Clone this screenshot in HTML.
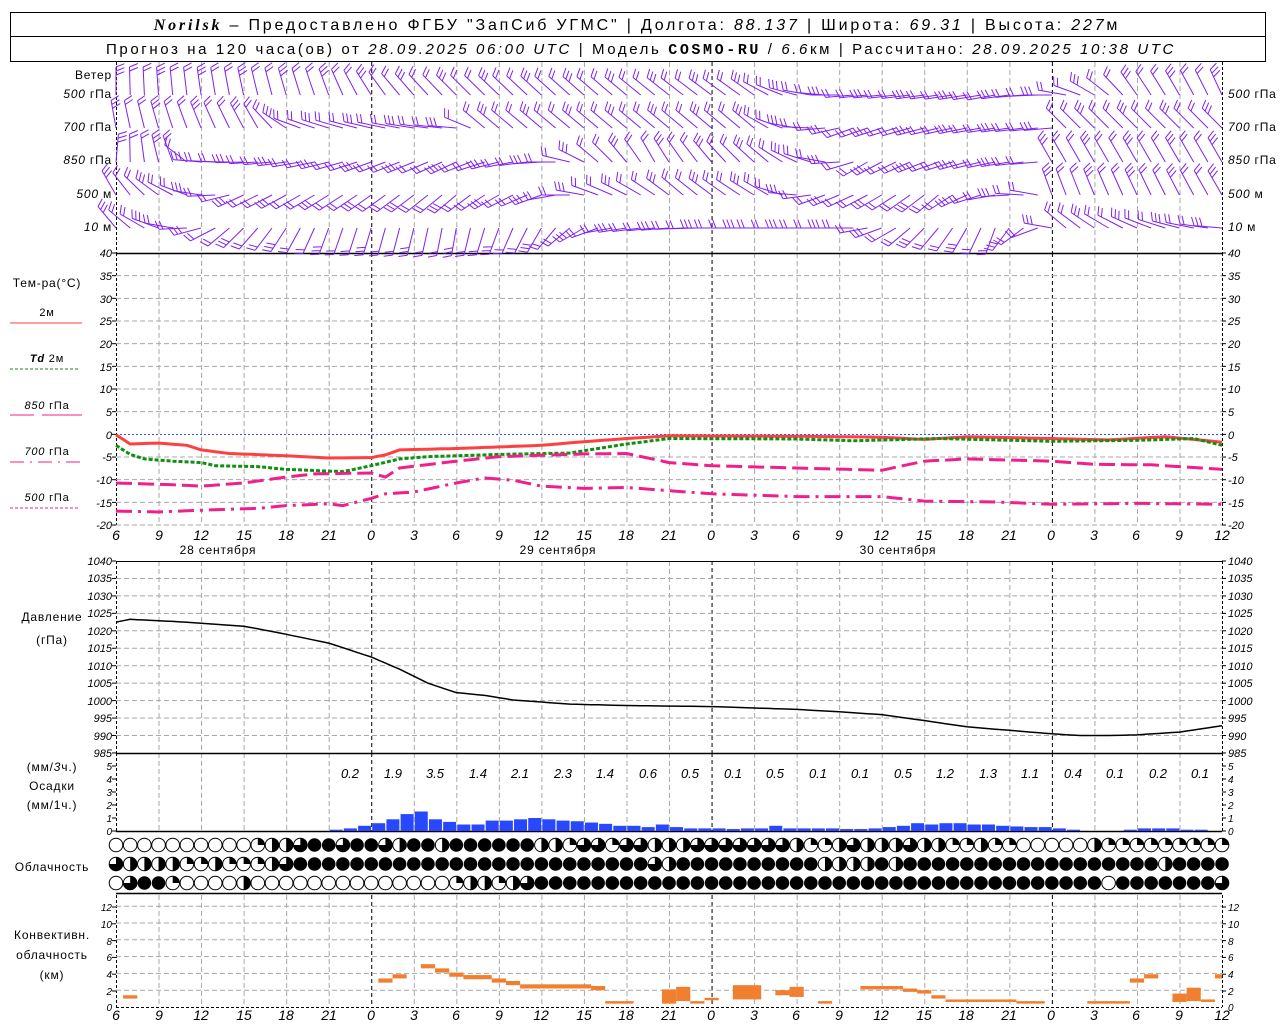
<!DOCTYPE html>
<html><head><meta charset="utf-8"><style>
body{margin:0;background:#fff;}
svg{display:block;font-family:"Liberation Sans",sans-serif;}
.t{font-size:11px;font-style:italic;}
.l{font-size:12px;letter-spacing:0.8px;}
.h{font-size:14px;font-style:italic;}
</style></head><body>
<svg id="s" width="1280" height="1024" viewBox="0 0 1280 1024" xmlns="http://www.w3.org/2000/svg">
<rect x="0" y="0" width="1280" height="1024" fill="#fff"/>
<g id="grid"></g>
<g id="data"></g>
<!-- header -->
<rect x="10.5" y="12.5" width="1255" height="49" fill="none" stroke="#000"/>
<line x1="10" y1="36.5" x2="1265" y2="36.5" stroke="#000"/>
<text x="637" y="30" text-anchor="middle" font-size="16" letter-spacing="2.8"><tspan font-family="Liberation Serif" font-style="italic" font-weight="bold">Norilsk</tspan> – Предоставлено ФГБУ "ЗапСиб УГМС" | Долгота: <tspan font-style="italic">88.137</tspan> | Широта: <tspan font-style="italic">69.31</tspan> | Высота: <tspan font-style="italic">227</tspan>м</text>
<text x="641" y="54" text-anchor="middle" font-size="15" letter-spacing="2.6">Прогноз на 120 часа(ов) от <tspan font-style="italic">28.09.2025 06:00 UTC</tspan>  | Модель <tspan font-family="Liberation Mono" font-weight="bold">COSMO-RU</tspan> / <tspan font-style="italic">6.6</tspan>км | Рассчитано: <tspan font-style="italic">28.09.2025 10:38 UTC</tspan></text>

<!-- wind labels -->
<g class="l" font-size="11">
<text x="112" y="79" text-anchor="end">Ветер</text>
<text x="112" y="98" text-anchor="end"><tspan font-style="italic">500</tspan> гПа</text>
<text x="112" y="131" text-anchor="end"><tspan font-style="italic">700</tspan> гПа</text>
<text x="112" y="164" text-anchor="end"><tspan font-style="italic">850</tspan> гПа</text>
<text x="112" y="198" text-anchor="end"><tspan font-style="italic">500</tspan> м</text>
<text x="112" y="231" text-anchor="end"><tspan font-style="italic">10</tspan>   м</text>
<text x="1228" y="98"><tspan font-style="italic">500</tspan> гПа</text>
<text x="1228" y="131"><tspan font-style="italic">700</tspan> гПа</text>
<text x="1228" y="164"><tspan font-style="italic">850</tspan> гПа</text>
<text x="1228" y="198"><tspan font-style="italic">500</tspan> м</text>
<text x="1228" y="231"><tspan font-style="italic">10</tspan>   м</text>
</g>
<!-- temp legend -->
<g class="l">
<text x="47" y="287" text-anchor="middle">Тем-ра(°C)</text>
<text x="47" y="316" text-anchor="middle" font-size="11">2м</text>
<text x="47" y="362" text-anchor="middle" font-size="11"><tspan font-style="italic" font-weight="bold">Td</tspan>  2м</text>
<text x="47" y="409" text-anchor="middle" font-size="11"><tspan font-style="italic">850</tspan> гПа</text>
<text x="47" y="455" text-anchor="middle" font-size="11"><tspan font-style="italic">700</tspan> гПа</text>
<text x="47" y="501" text-anchor="middle" font-size="11"><tspan font-style="italic">500</tspan> гПа</text>
<text x="218" y="554" text-anchor="middle">28 сентября</text>
<text x="558" y="554" text-anchor="middle">29 сентября</text>
<text x="898" y="554" text-anchor="middle">30 сентября</text>
<text x="52" y="621" text-anchor="middle">Давление</text>
<text x="52" y="644" text-anchor="middle">(гПа)</text>
<text x="52" y="771" text-anchor="middle">(мм/<tspan font-style="italic">3</tspan>ч.)</text>
<text x="52" y="790" text-anchor="middle">Осадки</text>
<text x="52" y="809" text-anchor="middle">(мм/1ч.)</text>
<text x="52" y="871" text-anchor="middle">Облачность</text>
<text x="52" y="939" text-anchor="middle">Конвективн.</text>
<text x="52" y="959" text-anchor="middle">облачность</text>
<text x="52" y="979" text-anchor="middle">(км)</text>
</g>
<line x1="10" y1="323" x2="82" y2="323" stroke="#ff4040" stroke-width="1"/>
<line x1="10" y1="369" x2="78" y2="369" stroke="#208020" stroke-dasharray="3,2"/>
<line x1="10" y1="415" x2="34" y2="415" stroke="#f0208a"/><line x1="42" y1="415" x2="82" y2="415" stroke="#f0208a"/>
<line x1="10" y1="462" x2="82" y2="462" stroke="#f0208a" stroke-dasharray="14,6,2,6"/>
<line x1="10" y1="508" x2="78" y2="508" stroke="#f0208a" stroke-dasharray="3,2"/>

<!-- temp axis labels -->
<g class="t">
<text x="112" y="257" text-anchor="end">40</text><text x="112" y="280" text-anchor="end">35</text><text x="112" y="303" text-anchor="end">30</text><text x="112" y="325" text-anchor="end">25</text><text x="112" y="348" text-anchor="end">20</text><text x="112" y="371" text-anchor="end">15</text><text x="112" y="393" text-anchor="end">10</text><text x="112" y="416" text-anchor="end">5</text><text x="112" y="439" text-anchor="end">0</text><text x="112" y="461" text-anchor="end">-5</text><text x="112" y="484" text-anchor="end">-10</text><text x="112" y="507" text-anchor="end">-15</text><text x="112" y="529" text-anchor="end">-20</text>
<text x="1228" y="257">40</text><text x="1228" y="280">35</text><text x="1228" y="303">30</text><text x="1228" y="325">25</text><text x="1228" y="348">20</text><text x="1228" y="371">15</text><text x="1228" y="393">10</text><text x="1228" y="416">5</text><text x="1228" y="439">0</text><text x="1228" y="461">-5</text><text x="1228" y="484">-10</text><text x="1228" y="507">-15</text><text x="1228" y="529">-20</text>
<!-- pressure -->
<text x="112" y="565" text-anchor="end">1040</text><text x="112" y="582" text-anchor="end">1035</text><text x="112" y="600" text-anchor="end">1030</text><text x="112" y="617" text-anchor="end">1025</text><text x="112" y="635" text-anchor="end">1020</text><text x="112" y="652" text-anchor="end">1015</text><text x="112" y="670" text-anchor="end">1010</text><text x="112" y="687" text-anchor="end">1005</text><text x="112" y="705" text-anchor="end">1000</text><text x="112" y="722" text-anchor="end">995</text><text x="112" y="740" text-anchor="end">990</text><text x="112" y="757" text-anchor="end">985</text>
<text x="1228" y="565">1040</text><text x="1228" y="582">1035</text><text x="1228" y="600">1030</text><text x="1228" y="617">1025</text><text x="1228" y="635">1020</text><text x="1228" y="652">1015</text><text x="1228" y="670">1010</text><text x="1228" y="687">1005</text><text x="1228" y="705">1000</text><text x="1228" y="722">995</text><text x="1228" y="740">990</text><text x="1228" y="757">985</text>
<!-- precip -->
<g font-size="10"><text x="112" y="770" text-anchor="end">5</text><text x="112" y="783" text-anchor="end">4</text><text x="112" y="796" text-anchor="end">3</text><text x="112" y="809" text-anchor="end">2</text><text x="112" y="822" text-anchor="end">1</text><text x="112" y="835" text-anchor="end">0</text>
<text x="1228" y="770">5</text><text x="1228" y="783">4</text><text x="1228" y="796">3</text><text x="1228" y="809">2</text><text x="1228" y="822">1</text><text x="1228" y="835">0</text>
<!-- conv -->
<text x="112" y="911" text-anchor="end">12</text><text x="112" y="928" text-anchor="end">10</text><text x="112" y="945" text-anchor="end">8</text><text x="112" y="961" text-anchor="end">6</text><text x="112" y="978" text-anchor="end">4</text><text x="112" y="995" text-anchor="end">2</text><text x="112" y="1011" text-anchor="end">0</text>
<text x="1228" y="911">12</text><text x="1228" y="928">10</text><text x="1228" y="945">8</text><text x="1228" y="961">6</text><text x="1228" y="978">4</text><text x="1228" y="995">2</text><text x="1228" y="1011">0</text></g>
</g>
<!-- hour labels -->
<g class="h" text-anchor="middle">
<g transform="translate(0,540)">
<text x="116">6</text><text x="159">9</text><text x="201">12</text><text x="244">15</text><text x="286">18</text><text x="329">21</text><text x="371">0</text><text x="414">3</text><text x="456">6</text><text x="499">9</text><text x="541">12</text><text x="584">15</text><text x="626">18</text><text x="669">21</text><text x="711">0</text><text x="754">3</text><text x="796">6</text><text x="839">9</text><text x="881">12</text><text x="924">15</text><text x="966">18</text><text x="1009">21</text><text x="1051">0</text><text x="1094">3</text><text x="1136">6</text><text x="1179">9</text><text x="1222">12</text>
</g>
<g transform="translate(0,1020)">
<text x="116">6</text><text x="159">9</text><text x="201">12</text><text x="244">15</text><text x="286">18</text><text x="329">21</text><text x="371">0</text><text x="414">3</text><text x="456">6</text><text x="499">9</text><text x="541">12</text><text x="584">15</text><text x="626">18</text><text x="669">21</text><text x="711">0</text><text x="754">3</text><text x="796">6</text><text x="839">9</text><text x="881">12</text><text x="924">15</text><text x="966">18</text><text x="1009">21</text><text x="1051">0</text><text x="1094">3</text><text x="1136">6</text><text x="1179">9</text><text x="1222">12</text>
</g>
<g transform="translate(0,778)" font-size="13">
<text x="350">0.2</text><text x="393">1.9</text><text x="435">3.5</text><text x="478">1.4</text><text x="520">2.1</text><text x="563">2.3</text><text x="605">1.4</text><text x="648">0.6</text><text x="690">0.5</text><text x="733">0.1</text><text x="775">0.5</text><text x="818">0.1</text><text x="860">0.1</text><text x="903">0.5</text><text x="945">1.2</text><text x="988">1.3</text><text x="1030">1.1</text><text x="1073">0.4</text><text x="1115">0.1</text><text x="1158">0.2</text><text x="1200">0.1</text>
</g>
</g>
</svg>
<script>
(function(){
var NS="http://www.w3.org/2000/svg";
var G=document.getElementById('grid'),D=document.getElementById('data');
function el(p,n,a){var e=document.createElementNS(NS,n);for(var k in a)e.setAttribute(k,a[k]);p.appendChild(e);return e;}
function X(h){return 116+h*14.18;}
function ln(p,x1,y1,x2,y2,st,w,da){var a={x1:x1,y1:y1,x2:x2,y2:y2,stroke:st,'stroke-width':w||1};if(da)a['stroke-dasharray']=da;return el(p,'line',a);}
var panels=[[62,253],[253,525],[561,753],[753,831],[895,1007]];
panels.forEach(function(pp){
 for(var i=1;i<26;i++){var h=i*3,x=X(h)+0.5;var day=(h==18||h==42||h==66);
  ln(G,x,pp[0],x,pp[1],day?'#000':'#a8a8a8',1,day?'4,3':'5,3');}
 ln(G,116.5,pp[0],116.5,pp[1],'#000',1,'3,2');
 ln(G,1222.5,pp[0],1222.5,pp[1],'#000',1,'3,2');
});
for(var v=35;v>=-20;v-=5){var y=253+(40-v)*4.533;if(v!=0)ln(G,116,y,1222,y,'#a8a8a8',1,'5,3');}
for(var p=1035;p>=990;p-=5){var y=561+(1040-p)*3.49;ln(G,116,y,1222,y,'#a8a8a8',1,'5,3');}
for(var k=2;k<=12;k+=2){var y=1007-k*8.4;ln(G,116,y,1222,y,'#a8a8a8',1,'5,3');}
ln(G,116,253.5,1222,253.5,'#000',1.5);
ln(G,116,561.5,1222,561.5,'#000',1);
ln(G,116,753.5,1222,753.5,'#000',1.5);
ln(G,116,831.5,1222,831.5,'#000',1.5);
ln(G,116,893.5,1222,893.5,'#000',1.5);
ln(G,116,1007.5,1222,1007.5,'#000',1,'3,2');
ln(G,116,434.5,1222,434.5,'#3050ff',1,'2,2');
function ticks(y0,y1,step){for(var y=y0;y<=y1+0.1;y+=step){ln(G,112,y,116,y,'#000',1);ln(G,1222,y,1226,y,'#000',1);}}
ticks(253,525,22.67);ticks(561,753,17.45);ticks(766,831,13);ticks(907,1007,16.8);
function interp(kf,h){for(var i=0;i<kf.length-1;i++){if(h>=kf[i][0]&&h<=kf[i+1][0]){var t=(h-kf[i][0])/(kf[i+1][0]-kf[i][0]);return kf[i][1]+t*(kf[i+1][1]-kf[i][1]);}}return kf[kf.length-1][1];}
function curve(kf,fy,st,w,da){var pts=[];for(var h=0;h<=78;h+=0.5){pts.push(X(h).toFixed(1)+','+fy(interp(kf,h)).toFixed(1));}var a={points:pts.join(' '),fill:'none',stroke:st,'stroke-width':w};if(da)a['stroke-dasharray']=da;el(D,'polyline',a);}
var ty=function(v){return 434-v*4.533;};
curve([[0,-0.2],[1,-2.2],[3,-2],[5,-2.5],[6,-3.5],[8,-4.3],[12,-4.8],[15,-5.3],[18,-5.2],[19,-4.6],[20,-3.5],[24,-3.2],[30,-2.5],[33,-1.7],[36,-1],[39,-0.4],[48,-0.5],[54,-0.7],[57,-1.2],[60,-0.6],[66,-1],[70,-1.3],[74,-0.6],[78,-1.8]],ty,'#ff4040',3);
curve([[0,-2.5],[1,-4.5],[2,-5.5],[4,-6],[6,-6.3],[7,-7],[10,-7.2],[12,-7.8],[16,-8.3],[18,-7],[20,-5.5],[22,-5],[27,-4.5],[32,-4.2],[36,-2.2],[39,-1],[48,-1.1],[52,-1.5],[58,-1],[66,-1.6],[72,-1.4],[76,-1],[78,-2.5]],ty,'#109010',3,'4,2');
curve([[0,-10.8],[4,-11.2],[6,-11.5],[9,-10.8],[12,-9.5],[14,-8.8],[18,-8.6],[19,-9.5],[20,-7.5],[24,-6],[27,-5],[33,-4.4],[36,-4.3],[39,-6.3],[42,-7],[48,-7.5],[54,-8],[57,-6],[60,-5.5],[66,-6],[69,-6.7],[73,-6.8],[78,-7.8]],ty,'#f0208a',3,'16,6');
curve([[0,-17],[3,-17.2],[6,-16.8],[10,-16.4],[12,-15.8],[15,-15.4],[16,-15.8],[18,-14.2],[19,-13.2],[21,-12.8],[24,-10.8],[26,-9.7],[28,-10.2],[30,-11.5],[33,-12],[36,-11.8],[39,-12.5],[42,-13.2],[48,-13.8],[54,-13.8],[57,-14.8],[62,-15],[66,-15.5],[72,-15.3],[78,-15.5]],ty,'#f0208a',3,'16,6,3,6');
curve([[0,1022.5],[1,1023.3],[4,1022.7],[6,1022.2],[9,1021.3],[10,1020.6],[12,1019],[15,1016.5],[18,1012.5],[20,1009],[22,1005],[24,1002.3],[26,1001.5],[28,1000.2],[32,999],[36,998.6],[42,998.3],[48,997.5],[51,996.8],[54,996],[57,994.3],[60,992.5],[66,990.5],[68,990],[70,990],[72,990.2],[75,991],[78,992.8]],function(p){return 753-(p-985)*3.49;},'#000',1.5);
var pr={16:0.1,17:0.2,18:0.4,19:0.6,20:0.9,21:1.3,22:1.5,23:0.9,24:0.7,25:0.5,26:0.5,27:0.8,28:0.8,29:0.9,30:1.0,31:0.9,32:0.8,33:0.75,34:0.65,35:0.55,36:0.4,37:0.4,38:0.3,39:0.5,40:0.3,41:0.2,42:0.2,43:0.2,44:0.15,45:0.2,46:0.2,47:0.4,48:0.2,49:0.2,50:0.2,51:0.2,52:0.15,53:0.15,54:0.2,55:0.3,56:0.4,57:0.6,58:0.5,59:0.6,60:0.6,61:0.5,62:0.5,63:0.4,64:0.35,65:0.3,66:0.3,67:0.2,68:0.1,72:0.1,73:0.2,74:0.2,75:0.2,76:0.1,77:0.1};
for(var h in pr){var hh=+h,v=pr[h];var x=X(hh-1)+1,w=13;el(D,'rect',{x:x,y:831-v*13,width:w,height:v*13,fill:'#2848ff'});}
var rows=["0000000000122344344324424444442213313322233333332112322232211211000002111",
"3222211211123444444444444444444444444432444444444422224244444444444444444424444",
"0344100002000000000000001221234444444444444444444444444444444444444444044444443"];
rows.forEach(function(s,r){var cy=845+r*19;for(var i=0;i<79;i++){var c=+(s[i]||s[s.length-1]);var cx=X(i);var R=6.8;
 if(c==4){el(D,'circle',{cx:cx,cy:cy,r:R,fill:'#000'});continue;}
 el(D,'circle',{cx:cx,cy:cy,r:R,fill:'#fff',stroke:'#000','stroke-width':1});
 if(c==1)el(D,'path',{d:'M'+cx+','+cy+' V'+(cy-R)+' A'+R+','+R+' 0 0 1 '+(cx+R)+','+cy+' Z',fill:'#000'});
 if(c==2)el(D,'path',{d:'M'+cx+','+(cy-R)+' A'+R+','+R+' 0 0 1 '+cx+','+(cy+R)+' Z',fill:'#000'});
 if(c==3)el(D,'path',{d:'M'+cx+','+cy+' V'+(cy-R)+' A'+R+','+R+' 0 1 1 '+(cx-R)+','+cy+' Z',fill:'#000'});
}});
var cv=[[0.5,1.5,1.0,1.4],[18.5,19.5,2.9,3.4],[19.5,20.5,3.4,3.9],[21.5,22.5,4.6,5.1],[22.5,23.5,4.1,4.6],[23.5,24.5,3.6,4.1],[24.5,26.5,3.3,3.8],[26.5,27.5,2.9,3.4],[27.5,28.5,2.6,3.1],[28.5,33.5,2.2,2.7],[33.5,34.5,2.0,2.5],[34.5,36.5,0.4,0.7],[38.5,39.5,0.4,2.1],[39.5,40.5,0.7,2.4],[40.5,41.5,0.4,0.7],[41.5,42.5,0.8,1.1],[43.5,45.5,0.9,2.6],[46.5,47.5,1.4,2.0],[47.5,48.5,1.2,2.4],[49.5,50.5,0.4,0.7],[52.5,55.5,2.1,2.5],[55.5,56.5,1.8,2.2],[56.5,57.5,1.6,2.0],[57.5,58.5,1.0,1.4],[58.5,63.5,0.6,0.9],[63.5,65.5,0.4,0.7],[68.5,71.5,0.4,0.7],[71.5,72.5,2.9,3.4],[72.5,73.5,3.4,3.9],[74.5,75.5,0.6,1.6],[75.5,76.5,0.7,2.3],[76.5,77.5,0.6,0.9],[77.5,78,3.4,3.9]];
cv.forEach(function(c){var x1=X(c[0]),x2=X(c[1]);el(D,'rect',{x:x1,y:1007-c[3]*8.4,width:x2-x1,height:(c[3]-c[2])*8.4,fill:'#f08030'});});
var W=[[95,[[0,0],[15,-20],[20,-40],[24,-45],[36,-50],[45,-55],[48,-75],[52,-95],[62,-100],[66,-90],[69,-60],[72,-35],[78,-25]]],
[128,[[0,-10],[10,-30],[13,-70],[24,-85],[26,-50],[45,-50],[48,-80],[52,-110],[66,-95],[67,-45],[78,-45]]],
[162,[[0,5],[4,-20],[6,-85],[18,-110],[24,-115],[31,-90],[34,-50],[38,-30],[46,-50],[50,-80],[53,-120],[65,-95],[66,-30],[78,-30]]],
[195,[[0,-30],[5,-70],[9,-115],[18,-125],[24,-130],[30,-110],[34,-70],[40,-50],[46,-60],[50,-110],[58,-130],[62,-100],[65,-80],[66,-20],[78,-30]]],
[228,[[0,-40],[4,-80],[8,-130],[15,-160],[24,-170],[30,-150],[35,-100],[42,-90],[52,-90],[56,-130],[62,-160],[65,-110],[67,-50],[78,-85]]]];
W.forEach(function(row){var by=row[0];for(var h=0;h<=78;h++){var a=interp(row[1],h)*Math.PI/180;var L=28;var bx=X(h);
 var dx=Math.sin(a),dy=-Math.cos(a);var tx=bx+dx*L,ty2=by+dy*L;
 var d='M'+bx.toFixed(1)+','+by+' L'+tx.toFixed(1)+','+ty2.toFixed(1);
 var fa=a+Math.PI*0.38;var fx=Math.sin(fa)*9,fy=-Math.cos(fa)*9;
 var nf=2+(h%3==0?1:0);
 for(var k=0;k<nf;k++){var px=tx-dx*k*4,py=ty2-dy*k*4;d+=' M'+px.toFixed(1)+','+py.toFixed(1)+' l'+fx.toFixed(1)+','+fy.toFixed(1);}
 el(D,'path',{d:d,fill:'none',stroke:'#8020f0','stroke-width':1});
}});
})();
</script>
</body></html>
